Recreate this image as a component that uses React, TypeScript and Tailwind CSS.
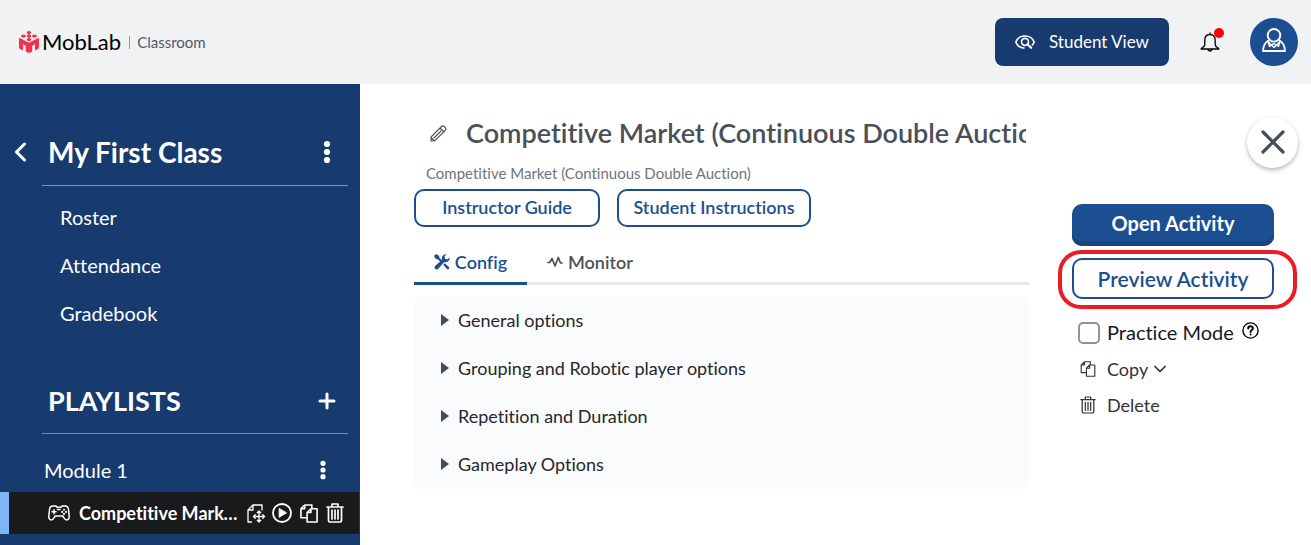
import type { ReactNode } from "react";

type IconProps = { className?: string };

function Svg({
  className,
  viewBox,
  width = 1.5,
  children,
}: IconProps & { viewBox: string; width?: number; children: ReactNode }) {
  return (
    <svg
      className={className}
      viewBox={viewBox}
      fill="none"
      stroke="currentColor"
      strokeWidth={width}
      strokeLinecap="round"
      strokeLinejoin="round"
      aria-hidden="true"
    >
      {children}
    </svg>
  );
}

function LogoMark() {
  return (
    <svg viewBox="0 0 20 22" className="h-[22px] w-5 shrink-0" fill="#f4304f" aria-hidden="true">
      <path d="M0 8 Q0 6.600 1.300 7.200 L10 11.800 L18.700 7.200 Q20 6.600 20 8 V16.500 Q20 17.300 19.200 17.700 L16 19.400 V13.200 L13.200 14.800 V20.600 Q10 23 6.800 20.600 V14.800 L4 13.200 V19.400 L.8 17.700 Q0 17.300 0 16.500 Z" />
      <ellipse cx="10" cy="1.500" rx="2.300" ry="1.500" />
      <ellipse cx="10" cy="5.100" rx="2.300" ry="1.400" />
      <ellipse cx="10" cy="8.600" rx="2.300" ry="1.500" />
      <ellipse cx="4.500" cy="5.100" rx="2.500" ry="1.500" />
      <ellipse cx="15.500" cy="5.100" rx="2.500" ry="1.500" />
      <path d="M9 1h2v8H9z" opacity=".7" />
    </svg>
  );
}

function EyeIcon() {
  return (
    <Svg viewBox="0 0 20 14" width={1.700} className="h-[14px] w-5">
      <path d="M9 13C5 12.800 2 10 .9 7 2.200 3.600 5.800 1 10 1s7.800 2.600 9.100 6c-.4 1.200-1 2.200-1.800 3" />
      <circle cx="10" cy="6.800" r="3.500" width={2} />
      <path d="m12.500 9.300 3.600 3.500" strokeWidth={2.200} />
    </Svg>
  );
}

function BellIcon() {
  return (
    <Svg viewBox="0 0 20 20" width={1.3} className="h-5 w-5">
      <path d="M10 1v1.500M10 2.500C6.700 2.500 4.800 4.800 4.800 8v4.500c0 1.400-.8 2.300-2.300 3-1 .5-1.400 1-1.400 1.500h17.800c0-.5-.4-1-1.400-1.500-1.500-.7-2.300-1.600-2.300-3V8c0-3.200-1.900-5.500-5.200-5.500ZM7.800 17c.2 1.200 1 2 2.200 2s2-.8 2.200-2" />
    </Svg>
  );
}

function UserIcon() {
  return (
    <Svg viewBox="0 0 24 24" width={1.900} className="h-6 w-6">
      <circle cx="12" cy="7.300" r="6.300" />
      <path d="M6.500 12.500C3 14.500 1.200 18 1 23h22c-.2-5-2-8.500-5.500-10.500" />
      <path d="m6 13.500 6 6 6-6M6 13.500l1.500 5 4.500-3 4.500 3 1.500-5" strokeWidth={1.400} />
    </Svg>
  );
}

function DotsIcon({ className }: IconProps) {
  return (
    <svg viewBox="0 0 8 24" className={className} fill="currentColor" aria-hidden="true">
      <circle cx="4" cy="4" r="3.100" />
      <circle cx="4" cy="12" r="3.100" />
      <circle cx="4" cy="20" r="3.100" />
    </svg>
  );
}

function GamepadIcon() {
  return (
    <Svg viewBox="0 0 22 16" width={1.500} className="h-4 w-[22px] shrink-0">
      <path d="M5 1h3l1 1.200h4L14 1h3c2.200 0 3.200 1.200 3.500 3.500l.7 6.500c.2 2.500-.8 4-2.500 4-1.500 0-2.200-1-3-2.500l-.9-1.500H7.200l-.9 1.500C5.500 14 4.800 15 3.300 15 1.600 15 .6 13.500.8 11l.7-6.500C1.800 2.200 2.800 1 5 1Z" />
      <path d="M6 4.800v4M4 6.800h4M9.500 4.500h2.500" />
      <path d="M16 4.700v.1M18 6.800v.1M14.200 6.800v.1M16 8.800v.1" strokeWidth={2} />
    </Svg>
  );
}

function MoveFileIcon() {
  return (
    <Svg viewBox="0 0 19 19" width={1.300} className="h-[19px] w-[19px]">
      <path d="M4.500 18H1V6l5-5h9v5M6 1v5H1" />
      <path d="M12 7v11M6.500 12.500h11M10.300 8.700 12 7l1.700 1.700M10.300 16.300 12 18l1.700-1.700M8.200 10.800l-1.700 1.700 1.700 1.700M15.800 10.800l1.700 1.700-1.700 1.700" />
    </Svg>
  );
}

function PlayIcon() {
  return (
    <Svg viewBox="0 0 20 20" width={1.800} className="h-5 w-5">
      <circle cx="10" cy="10" r="9" />
      <path d="M7.200 5.800v8.400l7-4.200Z" fill="currentColor" strokeWidth={1} />
    </Svg>
  );
}

function CopyIcon({ className, width }: IconProps & { width?: number }) {
  return (
    <Svg viewBox="0 0 19 20" width={width} className={className}>
      <path d="M12.500 4.500V1H5L1 5v9.500h6.500M5 1v4H1" />
      <path d="M11.500 5H18v14H7.500V9l4-4ZM11.500 5v4h-4" />
    </Svg>
  );
}

function TrashIcon({ className, width }: IconProps & { width?: number }) {
  return (
    <Svg viewBox="0 0 18 20" width={width} className={className}>
      <path d="M1 4h16M6 4V1h6v3M2.500 4v13.500c0 1 .5 1.500 1.500 1.500h10c1 0 1.500-.5 1.500-1.500V4M6 7v9M9 7v9M12 7v9" />
    </Svg>
  );
}

function PencilIcon() {
  return (
    <Svg viewBox="0 0 17 17" width={1.100} className="h-[17px] w-[17px]">
      <path d="M1 16v-4L11.500 1.500c.8-.7 1.800-.7 2.600 0l1.200 1.200c.8.8.8 1.800 0 2.600L5 15.700 1 16ZM10 3l4 4M4 13l7-7M1 12.500 4.500 16" />
    </Svg>
  );
}

function ToolsIcon() {
  return (
    <svg viewBox="0 0 16 16" className="h-4 w-4" fill="currentColor" aria-hidden="true">
      <path d="M0 2 2 0l3 1.800.4 2L8 6.500 6.500 8 3.800 5.300l-2-.4Z" />
      <path d="M15.700 3.500A4.200 4.200 0 0 1 10.300 8L4 14.900A1.900 1.900 0 0 1 1.200 12L8 5.800A4.200 4.200 0 0 1 12.600.3L10.500 2.600l.5 2.200 2.300.6Z" />
      <path d="m10.800 9.200 4.400 4a1.500 1.500 0 0 1-2 2l-4-4.400Z" />
    </svg>
  );
}

function PulseIcon() {
  return (
    <Svg viewBox="0 0 16 12" width={1.700} className="h-3 w-4">
      <path d="M1 6.500h1.700L5 2.500l3 7.500 3.300-8.500L13.500 7H15" />
    </Svg>
  );
}

function HelpIcon() {
  return (
    <Svg viewBox="0 0 17 17" width={1.400} className="h-[17px] w-[17px]">
      <circle cx="8.500" cy="8.500" r="7.600" />
      <path d="M6.200 6.500c0-3 4.700-2.900 4.700-.2 0 1.700-2.300 1.800-2.300 3.600M8.600 12.500v.1" strokeWidth={2} />
    </Svg>
  );
}

const classLinks = ["Roster", "Attendance", "Gradebook"];
const sections = [
  "General options",
  "Grouping and Robotic player options",
  "Repetition and Duration",
  "Gameplay Options",
];

function Header() {
  return (
    <header className="flex h-[84px] items-center justify-between bg-[#f1f2f4] pr-[13px] pl-[19px]">
      <a href="#home" className="flex items-center">
        <LogoMark />
        <span className="ml-[3px] text-[22px] leading-6 text-black">MobLab</span>
        <span className="mr-[7px] ml-2 h-[13px] w-px bg-[#5aa5dc]" />
        <span className="text-[15px] leading-5 text-[#4d5968]">Classroom</span>
      </a>
      <div className="flex items-center">
        <button className="flex h-12 w-[174px] items-center gap-[14px] rounded-lg bg-[#173a6f] pl-5 text-[17px] text-white">
          <EyeIcon />
          Student View
        </button>
        <button aria-label="Notifications" className="relative ml-[31px] text-black">
          <BellIcon />
          <span className="absolute -top-1 -right-1 h-[10px] w-[10px] rounded-full bg-[#ff0000]" />
        </button>
        <button
          aria-label="Account"
          className="ml-[30px] flex h-12 w-12 items-center justify-center rounded-full bg-[#1b4f91] pb-1 text-white"
        >
          <UserIcon />
        </button>
      </div>
    </header>
  );
}

function Sidebar() {
  return (
    <nav className="w-[360px] shrink-0 bg-[#173a6f] pt-11 text-white">
      <div className="flex h-[57px] items-center pr-[29px] pb-[9px] pl-[14px]">
        <button aria-label="Back" className="mr-[20px]">
          <Svg viewBox="0 0 14 20" width={3} className="h-5 w-[14px]">
            <path d="m10.500 2-8 8 8 8" />
          </Svg>
        </button>
        <h2 className="flex-1 text-[28px] leading-8 font-bold">My First Class</h2>
        <button aria-label="Class menu">
          <DotsIcon className="h-6 w-2" />
        </button>
      </div>
      <hr className="mr-3 ml-[42px] border-[#6b9bc8]" />
      <ul className="mt-[7px] ml-[60px]">
        {classLinks.map((label) => (
          <li key={label}>
            <a href={"#" + label.toLowerCase()} className="flex h-12 items-center text-xl">
              {label}
            </a>
          </li>
        ))}
      </ul>
      <div className="mt-[38px] flex h-[51px] items-center justify-between pr-6 pl-12">
        <h2 className="text-[27px] leading-8 font-bold">PLAYLISTS</h2>
        <button aria-label="Add playlist">
          <Svg viewBox="0 0 18 18" width={3} className="h-[18px] w-[18px]">
            <path d="M9 2v14M2 9h14" />
          </Svg>
        </button>
      </div>
      <hr className="mt-[7px] mr-3 ml-[42px] border-[#6f8fb8]" />
      <div className="mt-[15px] mb-px flex h-[42px] items-center justify-between pr-[33px] pl-11">
        <a href="#module-1" className="text-xl">
          Module 1
        </a>
        <button aria-label="Module menu">
          <DotsIcon className="h-5 w-2" />
        </button>
      </div>
      <div className="mr-px flex h-[42px] items-center border-l-[9px] border-[#80b5f5] bg-[#181a1b] pr-[15px] pl-[39px]">
        <GamepadIcon />
        <a href="#activity" className="mr-1 ml-[9px] min-w-0 flex-1 truncate text-lg font-bold">
          Competitive Market (Continuous Double Auction)
        </a>
        <div className="flex items-center gap-2">
          <div className="flex items-center gap-[6px]">
            <button aria-label="Move">
              <MoveFileIcon />
            </button>
            <button aria-label="Play">
              <PlayIcon />
            </button>
          </div>
          <button aria-label="Duplicate">
            <CopyIcon className="h-[19px] w-[18px]" width={1.700} />
          </button>
          <button aria-label="Remove">
            <TrashIcon className="h-5 w-[18px]" width={1.700} />
          </button>
        </div>
      </div>
    </nav>
  );
}

function ActivityConfig() {
  return (
    <section className="min-w-0 flex-1 pt-[31px]">
      <div className="flex h-9 items-center pr-[3px] pl-4">
        <button aria-label="Rename activity" className="mr-[19px] text-[#4a4d52]">
          <PencilIcon />
        </button>
        <h1 className="min-w-0 flex-1 overflow-hidden text-[27px] leading-9 font-semibold whitespace-nowrap text-[#495057]">
          Competitive Market (Continuous Double Auction)
        </h1>
      </div>
      <p className="mt-3 ml-3 text-[15px] leading-5 text-[#6c757d]">
        Competitive Market (Continuous Double Auction)
      </p>
      <div className="mt-[6px] flex gap-[17px]">
        <button className="h-[38px] w-[186px] rounded-[10px] border-2 border-[#1b4f91] pb-[2px] text-lg leading-6 font-semibold text-[#1b4f91]">
          Instructor Guide
        </button>
        <button className="h-[38px] w-[194px] rounded-[10px] border-2 border-[#1b4f91] pb-[2px] text-lg leading-6 font-semibold text-[#1b4f91]">
          Student Instructions
        </button>
      </div>
      <div role="tablist" className="mt-[14px] flex h-11 text-lg font-semibold shadow-[inset_0_-3px_0_#e8e8e8]">
        <button
          role="tab"
          aria-selected="true"
          className="flex w-[113px] items-center justify-center gap-[5px] border-b-[3px] border-[#1b4f91] text-[#1b4f91]"
        >
          <ToolsIcon />
          Config
        </button>
        <button
          role="tab"
          aria-selected="false"
          className="ml-5 flex items-center gap-[5px] border-b-[3px] border-transparent text-[#4d5257]"
        >
          <PulseIcon />
          Monitor
        </button>
      </div>
      <ul className="mt-3 rounded-md bg-[#fafbfd]">
        {sections.map((label) => (
          <li key={label}>
            <button className="flex h-12 w-full items-center gap-[9px] pb-[2px] pl-[27px] text-lg text-[#25282c]">
              <svg viewBox="0 0 8 12" className="h-3 w-2" fill="#424a55" aria-hidden="true">
                <path d="M0 0v12l8-6Z" />
              </svg>
              {label}
            </button>
          </li>
        ))}
      </ul>
    </section>
  );
}

function Actions() {
  return (
    <aside className="w-[282px] shrink-0 pt-[33px] pl-[43px]">
      <div className="flex justify-end pr-[13px]">
        <button
          aria-label="Close"
          className="flex h-[51px] w-[51px] items-center justify-center rounded-full bg-white pb-[2px] text-[#464f59] shadow-[0_2px_4px_rgba(40,50,70,0.35)]"
        >
          <Svg viewBox="0 0 24 24" width={3.200} className="h-6 w-6">
            <path d="m2 2 20 20M22 2 2 22" />
          </Svg>
        </button>
      </div>
      <div className="mt-9 flex flex-col gap-3 pr-[37px]">
        <button className="h-[42px] rounded-[10px] bg-[#1b4f91] pb-1 text-xl font-bold text-white shadow-[inset_0_-5px_0_#18457e]">
          Open Activity
        </button>
        <div className="relative">
          <button className="h-[41px] w-full rounded-[10px] border-2 border-[#1b4f91] text-[21px] font-semibold text-[#1b4f91]">
            Preview Activity
          </button>
          <span className="pointer-events-none absolute -top-2 -right-[23px] -bottom-[10px] -left-[14px] rounded-[23px] border-4 border-[#ed1c24]" />
        </div>
      </div>
      <div className="mt-[18px] ml-[6px] flex h-8 items-center">
        <input
          id="practice"
          type="checkbox"
          className="h-[22px] w-[22px] appearance-none rounded-[5px] border-2 border-[#8a93a0] bg-white checked:bg-[#1b4f91]"
        />
        <label htmlFor="practice" className="ml-[7px] pb-[2px] text-xl text-[#17191c]">
          Practice Mode
        </label>
        <button aria-label="About practice mode" className="mb-[6px] ml-2 text-black">
          <HelpIcon />
        </button>
      </div>
      <button className="mt-[2px] ml-2 flex h-9 items-center text-lg text-[#303337]">
        <CopyIcon className="mr-[11px] h-4 w-4" width={1.400} />
        Copy
        <Svg viewBox="0 0 12 8" width={1.700} className="ml-[6px] h-2 w-3">
          <path d="m1 1.500 5 5 5-5" />
        </Svg>
      </button>
      <button className="ml-2 flex h-9 items-center text-lg text-[#303337]">
        <TrashIcon className="mr-[11px] h-[18px] w-4" width={1.400} />
        Delete
      </button>
    </aside>
  );
}

export default function App() {
  return (
    <div className="flex min-h-screen flex-col bg-white font-[Lato,sans-serif] [font-variant-ligatures:none]">
      <Header />
      <div className="flex flex-1">
        <Sidebar />
        <main className="flex min-w-0 flex-1 pl-[54px]">
          <ActivityConfig />
          <Actions />
        </main>
      </div>
    </div>
  );
}
